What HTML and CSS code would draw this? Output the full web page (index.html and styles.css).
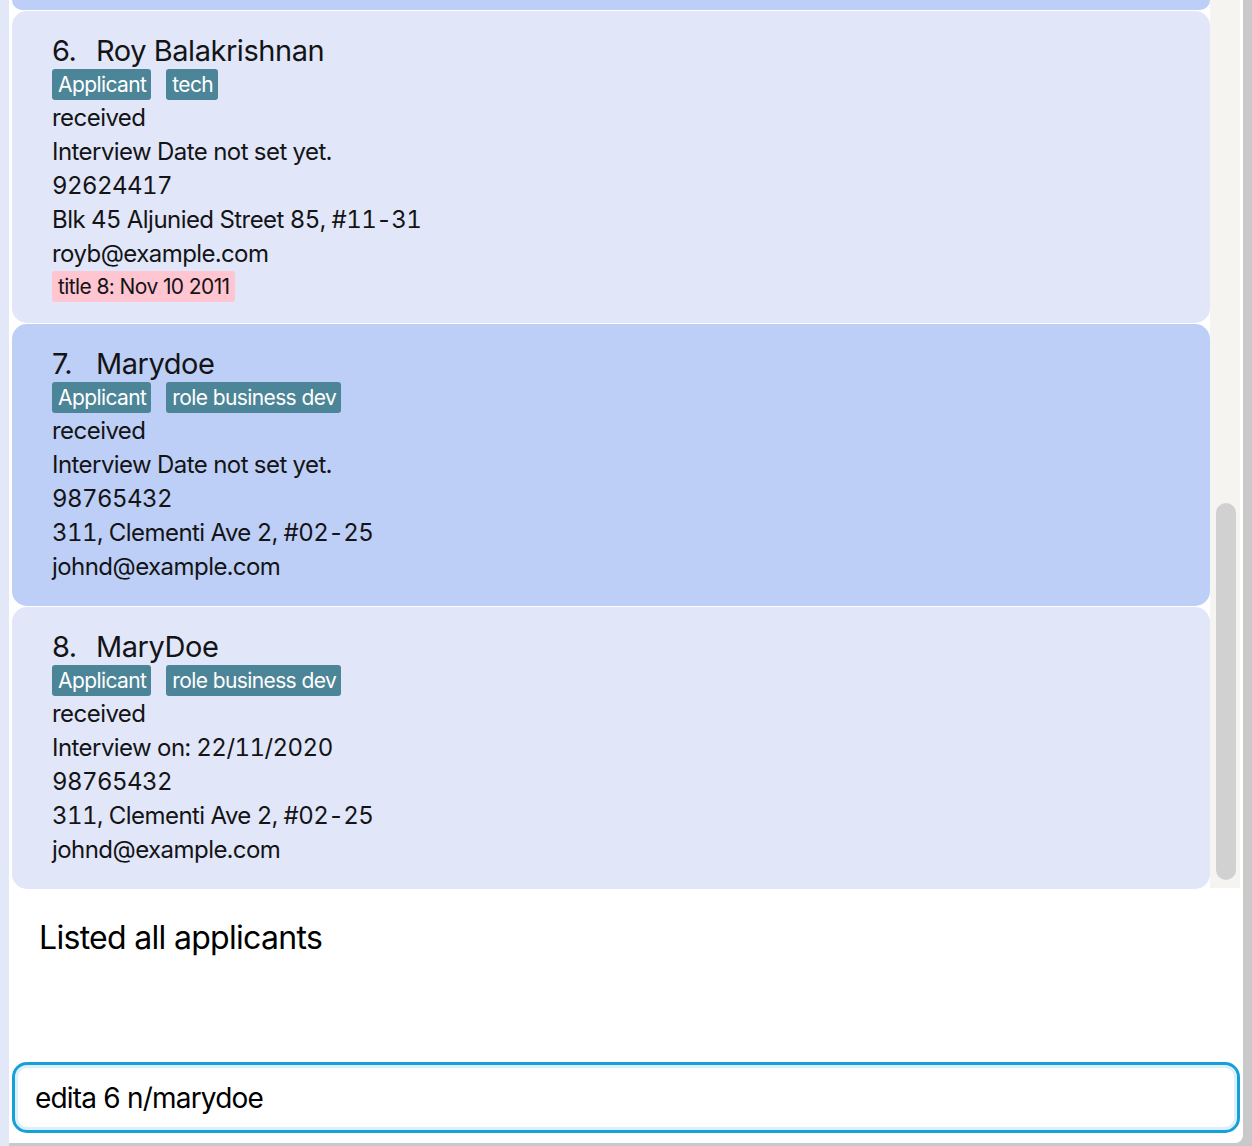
FILE: index.html
```html
<!DOCTYPE html>
<html>
<head>
<meta charset="utf-8">
<link rel="stylesheet" href="styles.css">
</head>
<body>
<div class="window">
  <div class="panel">
    <div class="list-pane">
      <div class="list">
        <div class="cell"><div class="card card-sel stub"></div></div>
        <div class="cell">
          <div class="card">
            <div class="name"><span class="idx">6.</span><span>Roy Balakrishnan</span></div>
            <div class="tags"><span class="tag">Applicant</span><span class="tag">tech</span></div>
            <div class="line">received</div>
            <div class="line">Interview Date not set yet.</div>
            <div class="line">92624417</div>
            <div class="line">Blk 45 Aljunied Street 85, #11-31</div>
            <div class="line">royb@example.com</div>
            <div class="tags tags-last"><span class="tag tag-pink">title 8: Nov 10 2011</span></div>
          </div>
        </div>
        <div class="cell">
          <div class="card card-sel">
            <div class="name"><span class="idx">7.</span><span>Marydoe</span></div>
            <div class="tags"><span class="tag">Applicant</span><span class="tag">role business dev</span></div>
            <div class="line">received</div>
            <div class="line">Interview Date not set yet.</div>
            <div class="line">98765432</div>
            <div class="line">311, Clementi Ave 2, #02-25</div>
            <div class="line">johnd@example.com</div>
          </div>
        </div>
        <div class="cell">
          <div class="card">
            <div class="name"><span class="idx">8.</span><span>MaryDoe</span></div>
            <div class="tags"><span class="tag">Applicant</span><span class="tag">role business dev</span></div>
            <div class="line">received</div>
            <div class="line">Interview on: 22/11/2020</div>
            <div class="line">98765432</div>
            <div class="line">311, Clementi Ave 2, #02-25</div>
            <div class="line">johnd@example.com</div>
          </div>
        </div>
      </div>
      <div class="track"><div class="thumb"></div></div>
    </div>
    <div class="result">Listed all applicants</div>
    <div class="command"><div class="command-box">edita 6 n/marydoe</div></div>
  </div>
</div>
</body>
</html>
```

FILE: styles.css
```css
* { box-sizing: border-box; }
html, body { margin: 0; padding: 0; }
body {
  width: 1252px;
  height: 1146px;
  overflow: hidden;
  background: #c9c9c9;
  font-family: "Inter", "Noto Sans", sans-serif;
  color: #141416;
}
.window {
  height: 1146px;
  display: flex;
  border-left: 9px solid #e3e8f8;
  padding-right: 9px;
}
.panel {
  flex: 1;
  background: #ffffff;
  border-bottom-right-radius: 8px;
  display: flex;
  flex-direction: column;
  height: 1143px;
}
.list-pane {
  height: 888px;
  display: flex;
  padding-right: 3px;
}
.list {
  flex: 1;
  display: flex;
  flex-direction: column;
  padding-left: 1px;
  gap: 1px;
  background: #fff;
}
.cell {
  background: #fff;
}
.card {
  background: #e1e7f9;
  border-radius: 15px;
  padding: 19px 40px 22px 40px;
  margin-left: 2px;
}
.card-sel { background: #bdcff6; }
.stub {
  height: 10px;
  padding: 0;
  border-top-left-radius: 0;
  border-top-right-radius: 0;
}
.name {
  font-size: 29px;
  line-height: 41px;
  letter-spacing: -0.45px;
  display: flex;
}
.idx { width: 44px; }
.tags {
  display: flex;
  gap: 15px;
  margin: -2px 0 1px;
}
.tags-last { margin: 0 0 -1px; }
.tag {
  background: #4d8598;
  color: #ffffff;
  font-size: 21px;
  letter-spacing: -0.6px;
  line-height: 31px;
  height: 31px;
  padding: 0 5px 0 6px;
  border-radius: 3px;
}
.tag-pink {
  background: #ffc5d0;
  color: #141416;
}
.line {
  font-size: 24px;
  line-height: 34px;
  letter-spacing: -0.55px;
  font-variant-numeric: tabular-nums;
}
.track {
  width: 30px;
  background: #f5f4f1;
  display: flex;
  flex-direction: column;
  justify-content: flex-end;
  padding: 0 4px 8px 6px;
}
.thumb {
  height: 377px;
  background: #d1d1d1;
  border-radius: 10px;
}
.result {
  height: 174px;
  padding: 30px 0 0 30px;
  font-size: 32px;
  letter-spacing: -0.7px;
  color: #000;
  line-height: 40px;
}
.command {
  padding: 0 3px 0 3px;
}
.command-box {
  height: 71px;
  border: 3px solid #16a0d8;
  border-radius: 15px;
  box-shadow: inset 0 0 0 3px #dcf0fa;
  padding-left: 20px;
  display: flex;
  align-items: center;
  font-size: 28px;
  letter-spacing: -0.8px;
  color: #000;
}
```
